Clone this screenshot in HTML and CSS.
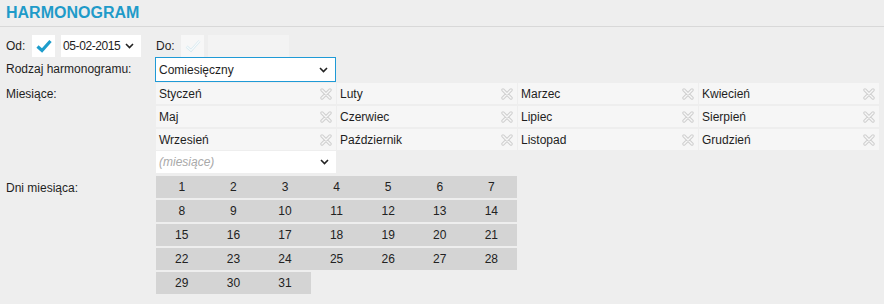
FILE: index.html
```html
<!DOCTYPE html>
<html lang="pl">

<head>
    <meta charset="UTF-8">
    <title>Harmonogram</title>
    <link rel="stylesheet" href="styles.css">
</head>

<body>
    <!-- Nagłówek -->
    <div class="header">HARMONOGRAM</div>

    <div class="form">
        <!-- Zakres dat -->
        <div class="row row-dates">
            <span class="lbl-od">Od:</span>
            <span class="check">
                <svg width="16" height="14" viewBox="0 0 16 14"><path d="M1.5 7.5 L6 11.5 L14.5 2" fill="none" stroke="#1e9dcc" stroke-width="3.2"/></svg>
            </span>
            <span class="select date">05-02-2015
                <svg class="chev" width="9" height="6" viewBox="0 0 9 6"><path d="M1 1 L4.5 4.5 L8 1" fill="none" stroke="#222" stroke-width="1.6"/></svg>
            </span>
            <span class="lbl-do">Do:</span>
            <span class="check off">
                <svg width="16" height="14" viewBox="0 0 16 14"><path d="M1.5 7.5 L6 11.5 L14.5 2" fill="none" stroke="#d3e7ef" stroke-width="2.6"/><path d="M1.5 7.5 L6 11.5 L14.5 2" fill="none" stroke="#f8fbfc" stroke-width="1.2"/></svg>
            </span>
            <span class="input-off"></span>
        </div>

        <!-- Rodzaj -->
        <div class="row">
            <span class="label">Rodzaj harmonogramu:</span>
            <span class="select kind">Comiesięczny
                <svg class="chev" width="9" height="6" viewBox="0 0 9 6"><path d="M1 1 L4.5 4.5 L8 1" fill="none" stroke="#222" stroke-width="1.6"/></svg>
            </span>
        </div>

        <!-- Miesiące -->
        <div class="row">
            <span class="label">Miesiące:</span>
            <div class="months-box">
                <div class="months" id="months"></div>
                <span class="select picker"><i>(miesiące)</i>
                    <svg class="chev" width="9" height="6" viewBox="0 0 9 6"><path d="M1 1 L4.5 4.5 L8 1" fill="none" stroke="#222" stroke-width="1.6"/></svg>
                </span>
            </div>
        </div>

        <!-- Dni miesiąca -->
        <div class="row row-days">
            <span class="label days-lbl">Dni miesiąca:</span>
            <div class="days" id="days"></div>
        </div>
    </div>

    <script>
        const months = ['Styczeń', 'Luty', 'Marzec', 'Kwiecień', 'Maj', 'Czerwiec', 'Lipiec', 'Sierpień',
            'Wrzesień', 'Październik', 'Listopad', 'Grudzień'];
        const cross = '<svg width="12" height="12" viewBox="0 0 12 12">' +
            '<path d="M2 2 L10 10 M10 2 L2 10" stroke="#cfcfcf" stroke-width="3.4" stroke-linecap="round"/>' +
            '<path d="M2 2 L10 10 M10 2 L2 10" stroke="#f7f7f7" stroke-width="1.4" stroke-linecap="round"/></svg>';

        const monthsEl = document.getElementById('months');
        months.forEach(m => {
            const tag = document.createElement('div');
            tag.className = 'tag';
            tag.innerHTML = '<span>' + m + '</span>' + cross;
            monthsEl.appendChild(tag);
        });

        const daysEl = document.getElementById('days');
        for (let d = 1; d <= 31; d++) {
            const cell = document.createElement('div');
            cell.className = 'day';
            cell.textContent = d;
            daysEl.appendChild(cell);
        }
    </script>
</body>

</html>
```

FILE: styles.css
```css
body {
    margin: 0;
    background: #eeeeee;
    font-family: "Liberation Sans", Arial, sans-serif;
    font-size: 12px;
    color: #1e1e1e;
}

/* Nagłówek */
.header {
    height: 27px;
    box-sizing: border-box;
    padding: 4px 0 0 6px;
    font-size: 16px;
    font-weight: bold;
    color: #1f9bc9;
    border-bottom: 1px solid #d8d8d8;
}

.form {
    padding-top: 8px;
}

.row {
    display: flex;
    align-items: flex-start;
}

.label {
    width: 149px;
    padding-left: 6px;
    line-height: 25px;
    flex-shrink: 0;
}

/* Wiersz z datami */
.row-dates {
    height: 22px;
    align-items: center;
}

.lbl-od {
    width: 26px;
    padding-left: 6px;
}

.lbl-do {
    width: 25px;
    margin-left: 15px;
}

.check {
    width: 23px;
    height: 22px;
    background: #fff;
    display: flex;
    align-items: center;
    justify-content: center;
}

.check.off {
    background: #f7f7f7;
}

.input-off {
    width: 81px;
    height: 22px;
    margin-left: 4px;
    background: #f3f3f3;
}

/* Pola wyboru */
.select {
    position: relative;
    background: #fff;
    box-sizing: border-box;
    display: flex;
    align-items: center;
    padding-left: 3px;
}

.select .chev {
    position: absolute;
    right: 7px;
    top: 50%;
    margin-top: -3px;
}

.date {
    width: 80px;
    height: 22px;
    margin-left: 6px;
    padding-left: 2px;
    letter-spacing: -0.4px;
}

.kind {
    width: 181px;
    height: 25px;
    border: 1px solid #1f9ad6;
}

.picker {
    width: 180px;
    height: 22px;
    margin-top: 1px;
    color: #a9a9a9;
}

/* Miesiące */
.months-box {
    padding-left: 1px;
    padding-top: 1px;
}

.months {
    display: grid;
    grid-template-columns: repeat(4, 180px);
    column-gap: 1px;
    row-gap: 2px;
}

.tag {
    height: 21px;
    background: #f6f6f6;
    display: flex;
    align-items: center;
    justify-content: space-between;
    padding: 0 4px 0 3px;
}

/* Dni miesiąca */
.row-days {
    margin-top: 3px;
}

.days-lbl {
    line-height: 24px;
}

.days {
    margin-left: 1px;
    display: grid;
    grid-template-columns: repeat(7, 51.6px);
    grid-auto-rows: 22px;
    row-gap: 2px;
}

.day {
    background: #d4d4d4;
    display: flex;
    align-items: center;
    justify-content: center;
    color: #222;
}
```
